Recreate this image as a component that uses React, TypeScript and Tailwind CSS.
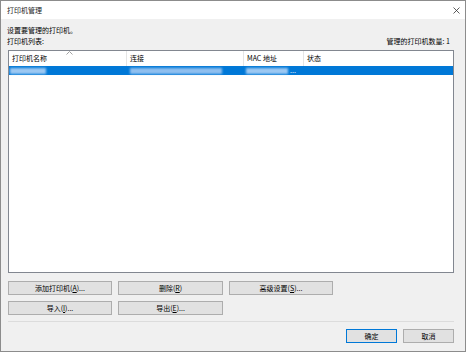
import React from 'react';

const font = { fontFamily: '"Noto Sans CJK SC", "Microsoft YaHei", sans-serif' };

function Btn({ children, w = 'w-[104px]', primary = false }: { children: React.ReactNode; w?: string; primary?: boolean }) {
  return (
    <div
      className={`${w} h-[14px] flex items-center justify-center bg-[#e1e1e1] text-[7px] leading-none text-black border ${
        primary ? 'border-[#0078d7]' : 'border-[#adadad]'
      }`}
    >
      {children}
    </div>
  );
}

export default function App() {
  return (
    <div style={font} className="w-[466px] h-[352px] border border-[#8c8c8c] bg-[#f0f0f0] flex flex-col overflow-hidden">
      {/* title bar */}
      <div className="h-[18px] bg-white flex items-center justify-between pl-[6px] pr-[5px]">
        <span className="text-[7px] leading-none text-[#1a1a1a]">打印机管理</span>
        <svg width="7" height="7" viewBox="0 0 7 7">
          <path d="M0.5 0.5 L6.5 6.5 M6.5 0.5 L0.5 6.5" stroke="#333" strokeWidth="0.8" fill="none" />
        </svg>
      </div>

      <div className="flex-1 flex flex-col pl-[7px] pr-[11px] pt-[6px]">
        <div className="h-[11px] flex items-center -ml-px text-[7px] leading-none text-black">设置要管理的打印机。</div>
        <div className="h-[11px] flex items-center justify-between -ml-px pr-[4px] text-[7px] leading-none text-black">
          <span>打印机列表:</span>
          <span>管理的打印机数量: 1</span>
        </div>

        {/* printer list */}
        <div className="mt-[3px] h-[223px] bg-white border border-[#828790] flex flex-col">
          <div className="relative h-[15px] flex text-[7px] leading-none text-black">
            <div className="w-[118px] flex items-center pl-[3px] border-r border-[#e5e5e5]">打印机名称</div>
            <div className="w-[117px] flex items-center pl-[3px] border-r border-[#e5e5e5]">连接</div>
            <div className="w-[60px] flex items-center pl-[3px] border-r border-[#e5e5e5]">MAC 地址</div>
            <div className="flex-1 flex items-center pl-[3px]">状态</div>
            <svg width="7" height="4" viewBox="0 0 7 4" className="absolute left-[57px] top-[0px]">
              <path d="M0.5 3.5 L3.5 0.5 L6.5 3.5" stroke="#8a8a8a" strokeWidth="0.8" fill="none" />
            </svg>
          </div>
          <div className="h-[9px] bg-[#0078d7] flex items-center">
            <div className="w-[118px] pl-[1px]">
              <div className="w-[36px] h-[6px] bg-[#9cc8f2] blur-[1px]" />
            </div>
            <div className="w-[117px] pl-[3px]">
              <div className="w-[92px] h-[6px] bg-[#8fbfef] blur-[1px]" />
            </div>
            <div className="w-[60px] pl-[2px] flex items-center gap-[2px]">
              <div className="w-[42px] h-[6px] bg-[#9cc8f2] blur-[1px]" />
              <span className="text-[7px] leading-none text-white">...</span>
            </div>
          </div>
        </div>

        {/* action buttons */}
        <div className="mt-[8px] flex gap-x-[6px]">
          <Btn>
            添加打印机(<u>A</u>)...
          </Btn>
          <Btn w="w-[105px]">
            删除(<u>R</u>)
          </Btn>
          <Btn>
            高级设置(<u>S</u>)...
          </Btn>
        </div>
        <div className="mt-[6px] flex gap-x-[6px]">
          <Btn>
            导入(<u>I</u>)...
          </Btn>
          <Btn w="w-[105px]">
            导出(<u>E</u>)...
          </Btn>
        </div>

        <div className="mt-[6px] h-px bg-[#dcdcdc]" />

        <div className="mt-[7px] flex justify-end gap-x-[6px]">
          <Btn w="w-[51px]" primary>
            确定
          </Btn>
          <Btn w="w-[51px]">取消</Btn>
        </div>
      </div>
    </div>
  );
}
